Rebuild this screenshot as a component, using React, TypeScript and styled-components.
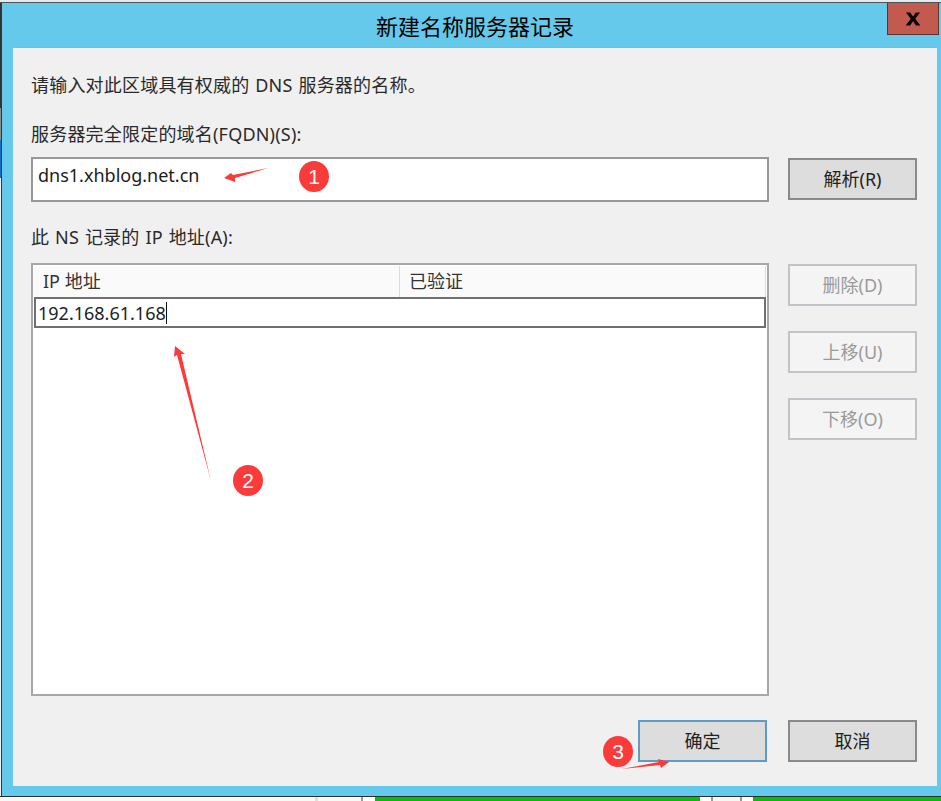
import React from "react";
import styled, { createGlobalStyle } from "styled-components";

const GlobalStyle = createGlobalStyle`
  html, body {
    margin: 0;
    padding: 0;
    width: 941px;
    height: 801px;
    overflow: hidden;
    background: #f0f0f0;
    font-family: "Noto Sans", "Noto Sans CJK SC", sans-serif;
    color: #1c1c1c;
  }
  * { box-sizing: border-box; }
`;

const Page = styled.div`
  position: relative;
  width: 941px;
  height: 801px;
  display: flex;
  flex-direction: column;
  background-color: #f4f4f4;
  background-image: linear-gradient(
    to bottom,
    #e6eaec 0 3px,
    #333 3px 108px,
    #8a8a8a 108px 140px,
    #0a70c0 140px 178px,
    #f4f4f4 178px
  );
  background-size: 1px 100%;
  background-repeat: no-repeat;
`;

const TopStrip = styled.div`
  height: 3px;
  background: #e6eaec;
  border-bottom: 1px solid #4c5458;
`;

const Window = styled.div`
  height: 793px;
  margin-left: 1px;
  border-left: 1px solid #2c3a40;
  padding: 0 4px 10px 11px;
  background: #65c9ec;
  display: flex;
  flex-direction: column;
`;

const TitleBar = styled.div`
  height: 45px;
  flex: none;
  position: relative;
  display: flex;
  align-items: center;
  justify-content: center;
`;

const Title = styled.div`
  font-size: 22px;
  line-height: 30px;
  color: #000;
`;

const CloseButton = styled.div`
  position: absolute;
  right: -2px;
  top: 0;
  width: 52px;
  height: 32px;
  background: #c25a50;
  border: 1px solid #5b3230;
  border-top: 0;
  display: flex;
  align-items: center;
  justify-content: center;
  svg { display: block; }
`;

const Body = styled.div`
  flex: 1;
  background: #f0f0f0;
  box-shadow: 0 -1px 0 #8fb4c8;
  padding: 22px 20px 24px 18px;
  display: flex;
  flex-direction: column;
`;

const Label = styled.div<{ $top?: number; $gap: number }>`
  font-size: 18px;
  line-height: 30px;
  letter-spacing: 0.2px;
  word-spacing: 1px;
  margin-top: ${(p) => p.$top ?? 0}px;
  margin-bottom: ${(p) => p.$gap}px;
  color: #2a2a2a;
`;

const Row = styled.div`
  display: flex;
  justify-content: space-between;
  align-items: flex-start;
`;

const FieldBox = styled.div`
  width: 738px;
  height: 45px;
  background: #fff;
  border: 2px solid #989898;
  padding: 0 5px;
  font-size: 18px;
  line-height: 32px;
`;

const Button = styled.div<{ $disabled?: boolean; $focused?: boolean }>`
  width: 129px;
  height: 42px;
  flex: none;
  display: flex;
  align-items: center;
  justify-content: center;
  padding-bottom: 2px;
  font-size: 18px;
  background: ${(p) => (p.$disabled ? "#f4f4f4" : "#dddddd")};
  color: ${(p) => (p.$disabled ? "#9a9a9a" : "#222")};
  border: 2px solid ${(p) => (p.$focused ? "#5f9cc4" : p.$disabled ? "#c0c4c8" : "#8a8a8a")};
`;

const ResolveButton = styled(Button)`
  margin-top: 1px;
`;

const ListPanel = styled.div`
  width: 738px;
  height: 433px;
  background: #fff;
  border: 2px solid #a5a8aa;
  padding: 1px 1px 0;
  display: flex;
  flex-direction: column;
`;

const HeaderRow = styled.div`
  display: flex;
  height: 31px;
  background: #fafafa;
  flex: none;
`;

const HeaderCell = styled.div<{ $width?: number }>`
  width: ${(p) => (p.$width ? `${p.$width}px` : "auto")};
  flex: ${(p) => (p.$width ? "none" : 1)};
  padding-left: 9px;
  font-size: 18px;
  line-height: 30px;
  color: #333;
  border-right: 1px solid #dcdcdc;
`;

const EditRow = styled.div`
  height: 31px;
  flex: none;
  border: 2px solid #707070;
  background: #fff;
  padding-left: 2px;
  display: flex;
  align-items: center;
  font-size: 18px;
  color: #222;
`;

const Caret = styled.span`
  width: 1px;
  height: 22px;
  background: #111;
`;

const SideButtons = styled.div`
  display: flex;
  flex-direction: column;
  gap: 25px;
  padding-top: 1px;
`;

const Footer = styled.div`
  display: flex;
  justify-content: flex-end;
  gap: 21px;
  margin-top: 24px;
`;

const BottomStrip = styled.div`
  flex: 1;
  background: #fff;
  border-top: 1px solid #2c2c2c;
  display: flex;
`;

const StripCell = styled.div<{ $width: number; $tone: string }>`
  width: ${(p) => p.$width}px;
  flex: none;
  background: ${(p) => p.$tone};
`;

const Overlay = styled.svg`
  position: absolute;
  left: 0;
  top: 0;
  pointer-events: none;
`;

const Badge = styled.div<{ $x: number; $y: number }>`
  position: absolute;
  left: ${(p) => p.$x}px;
  top: ${(p) => p.$y}px;
  width: 30px;
  height: 31px;
  border-radius: 50%;
  background: #fb3a3a;
  color: #fff;
  font-family: "Liberation Sans", sans-serif;
  font-size: 21px;
  display: flex;
  align-items: center;
  justify-content: center;
`;

const strip: [number, string][] = [
  [315, "#f8f8f8"],
  [3, "#e0e0e0"],
  [43, "#f8f8f8"],
  [2, "#999999"],
  [12, "#ffffff"],
  [325, "#0bbb0b"],
  [11, "#ffffff"],
  [2, "#999999"],
  [27, "#f6f6f6"],
  [2, "#999999"],
  [11, "#ffffff"],
  [188, "#0bbb0b"],
];

export default function App() {
  return (
    <Page>
      <GlobalStyle />
      <TopStrip />
      <Window>
        <TitleBar>
          <Title>新建名称服务器记录</Title>
          <CloseButton>
            <svg width="18" height="16" viewBox="0 0 18 16">
              <path d="M2 1.5h4.2L9 5.6l2.8-4.1H16l-4.8 6.3L16.3 14.5h-4.3L9 10.2 6 14.5H1.7l5.1-6.7z" fill="#000" />
            </svg>
          </CloseButton>
        </TitleBar>
        <Body>
          <Label $gap={19}>请输入对此区域具有权威的 DNS 服务器的名称。</Label>
          <Label $gap={8}>服务器完全限定的域名(FQDN)(S):</Label>
          <Row>
            <FieldBox>dns1.xhblog.net.cn</FieldBox>
            <ResolveButton>解析(R)</ResolveButton>
          </Row>
          <Label $top={20} $gap={11}>此 NS 记录的 IP 地址(A):</Label>
          <Row>
            <ListPanel>
              <HeaderRow>
                <HeaderCell $width={366}>IP 地址</HeaderCell>
                <HeaderCell>已验证</HeaderCell>
              </HeaderRow>
              <EditRow>
                192.168.61.168
                <Caret />
              </EditRow>
            </ListPanel>
            <SideButtons>
              <Button $disabled>删除(D)</Button>
              <Button $disabled>上移(U)</Button>
              <Button $disabled>下移(O)</Button>
            </SideButtons>
          </Row>
          <Footer>
            <Button $focused>确定</Button>
            <Button>取消</Button>
          </Footer>
        </Body>
      </Window>
      <BottomStrip>
        {strip.map(([width, tone], i) => (
          <StripCell key={i} $width={width} $tone={tone} />
        ))}
      </BottomStrip>
      <Overlay width="941" height="801" viewBox="0 0 941 801">
        <path d="M224 178 L231 173 L233 175 L268 168 L235 178 L235 182 Z" fill="#fb3a3a" />
        <path d="M175 346 L185 354 L181 354 L211 481 L177 355 L174 357 Z" fill="#fb3a3a" />
        <path d="M669 762 L658 759 L659 762 L622 769 L660 765 L661 768 Z" fill="#fb3a3a" />
      </Overlay>
      <Badge $x={299} $y={161}>1</Badge>
      <Badge $x={233} $y={465}>2</Badge>
      <Badge $x={603} $y={736}>3</Badge>
    </Page>
  );
}
